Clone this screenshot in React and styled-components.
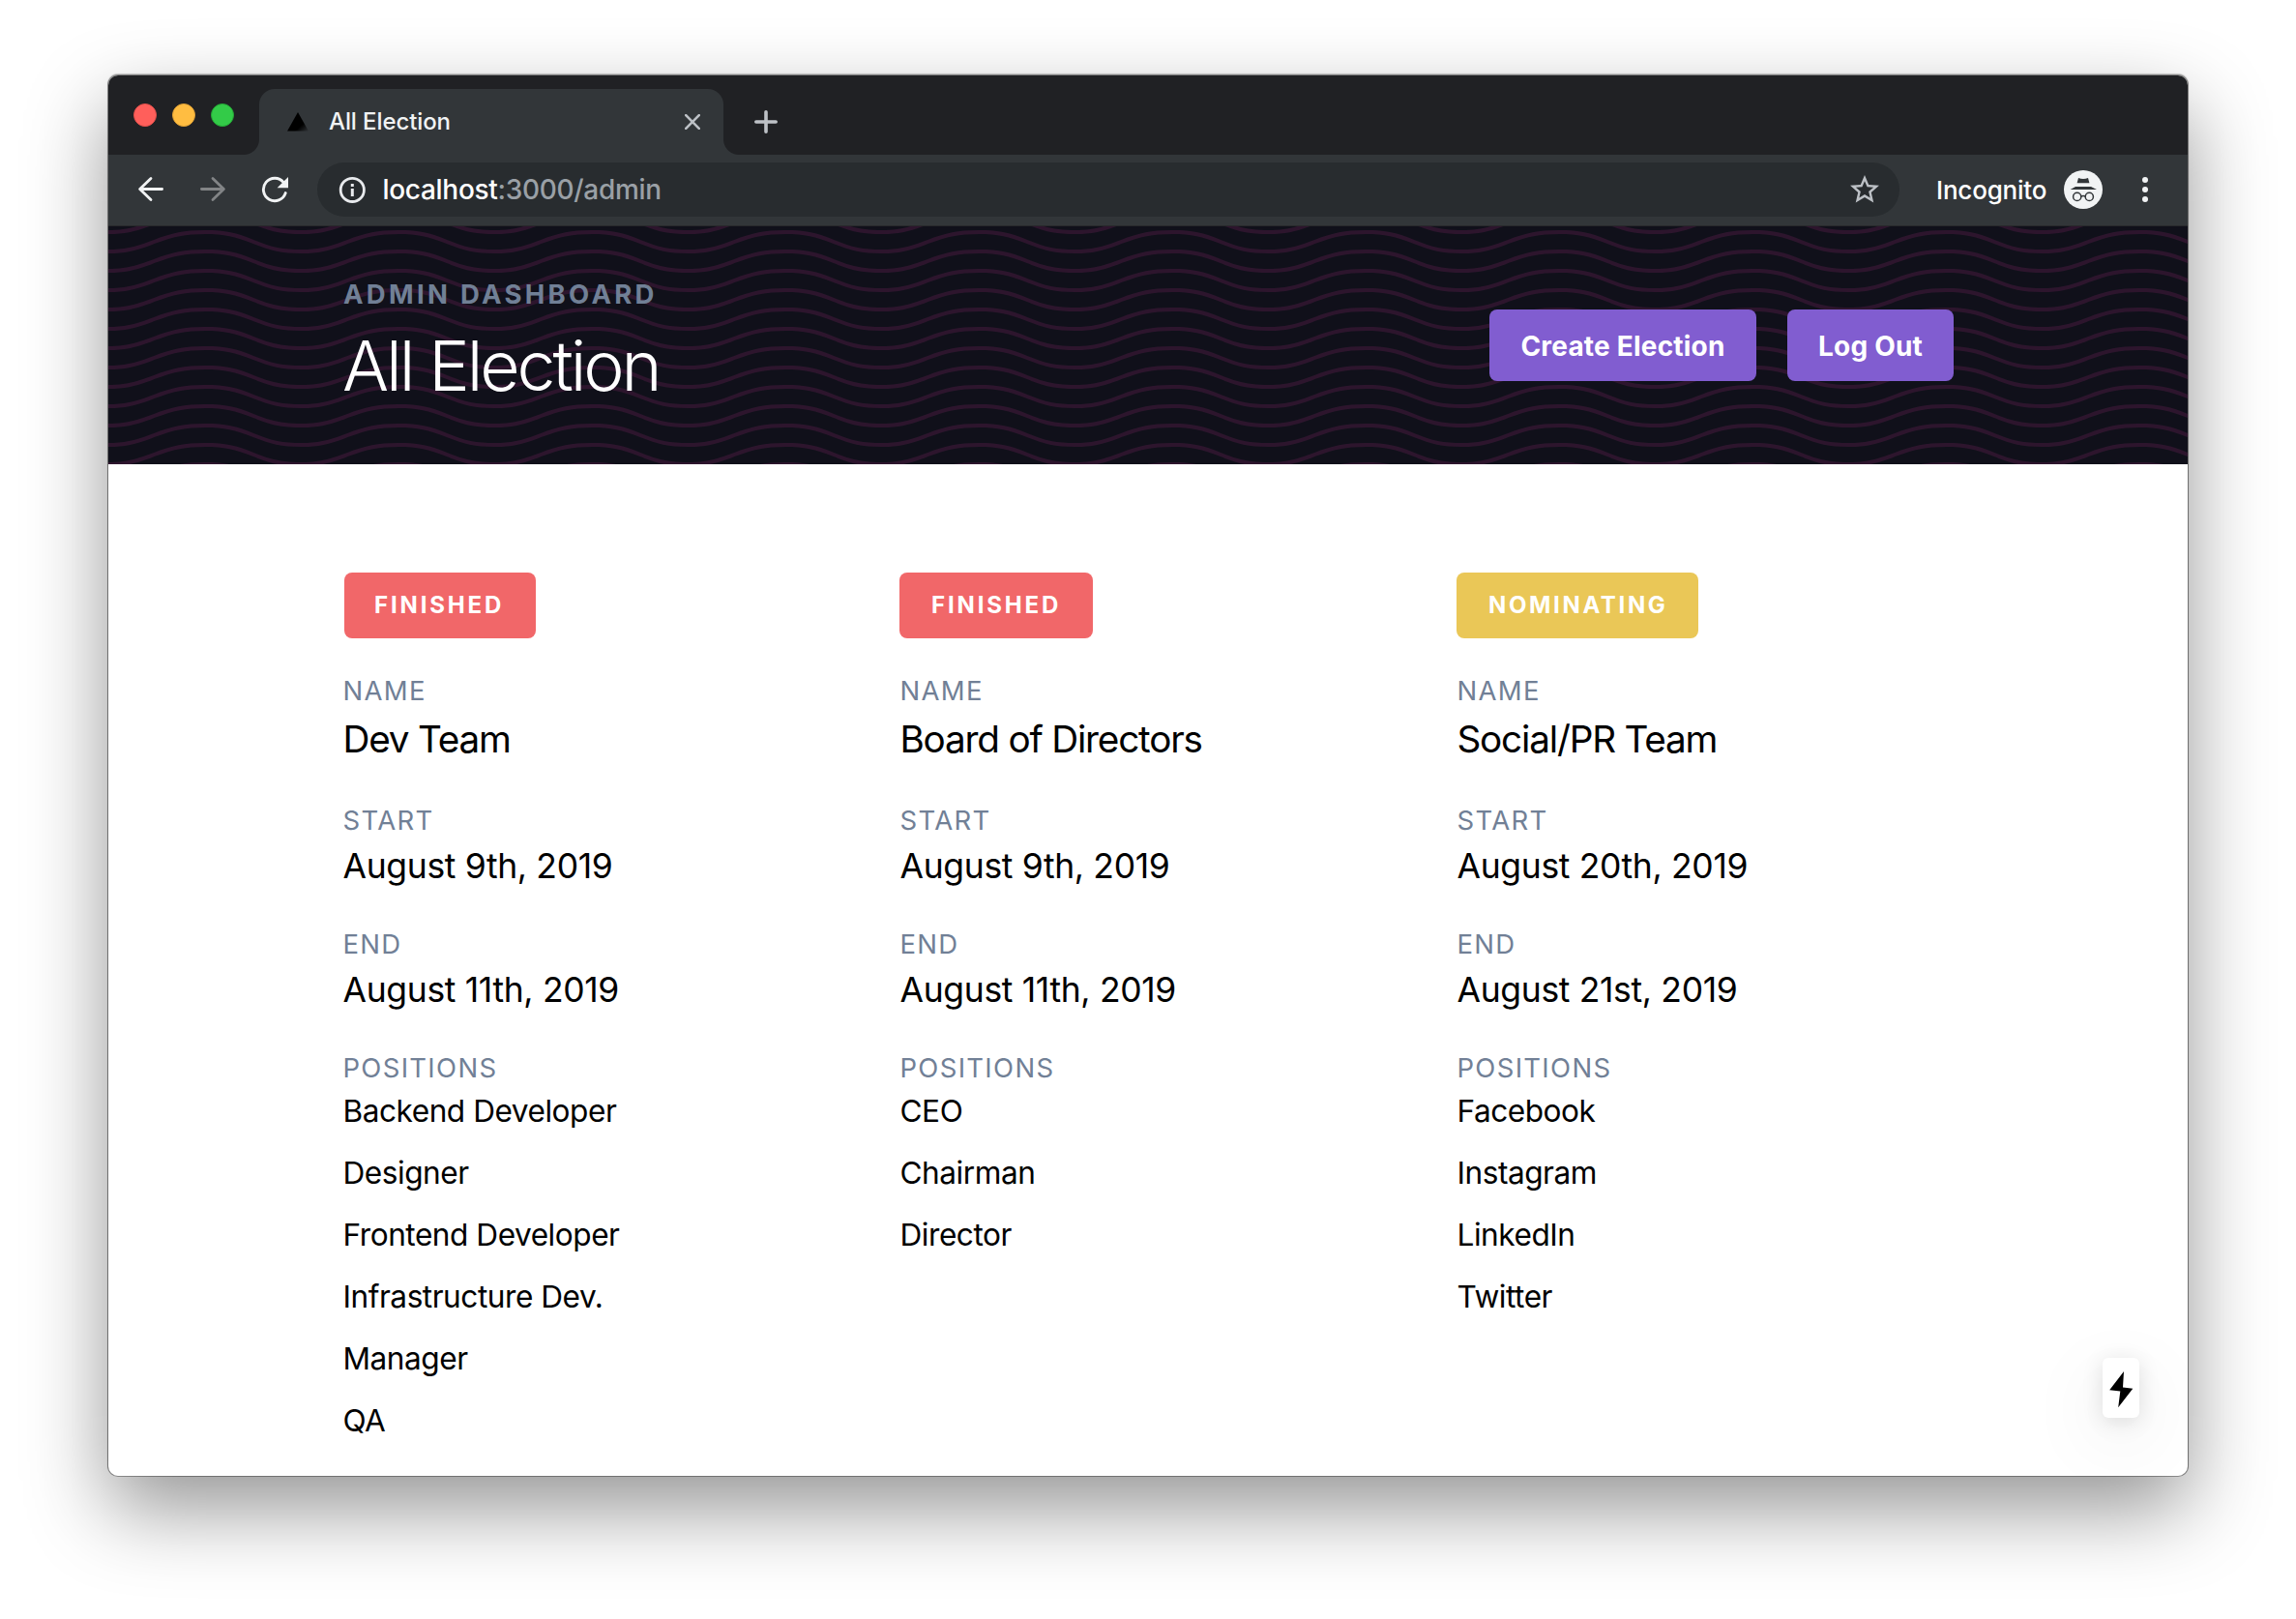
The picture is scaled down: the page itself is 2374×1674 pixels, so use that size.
import React from 'react';
import styled, { createGlobalStyle } from 'styled-components';

const GlobalStyle = createGlobalStyle`
  *, *::before, *::after { box-sizing: border-box; }
  html, body { margin: 0; padding: 0; background: #fff; }
  body { font-family: Inter, "Liberation Sans", sans-serif; }
  h1, h2, p, ul, dl, dt, dd { margin: 0; padding: 0; font-weight: inherit; }
  svg { display: block; flex: none; }
`;

const Desktop = styled.div`
  display: flex;
  width: 2374px;
  height: 1674px;
  padding: 78px 112px 148px;
  overflow: hidden;
`;

const BrowserWindow = styled.div`
  flex: 1;
  min-width: 0;
  display: flex;
  flex-direction: column;
  border-radius: 10px;
  background: #fff;
  box-shadow: 0 0 0 1px rgba(0, 0, 0, 0.32), 0 -1px 1px 1px rgba(0, 0, 0, 0.2), 0 34px 84px rgba(0, 0, 0, 0.42);
`;

/* ---------- Tab strip ---------- */

const TabStrip = styled.div`
  flex: none;
  display: flex;
  align-items: flex-end;
  height: 82px;
  border-radius: 10px 10px 0 0;
  background: #202124;
`;

const TrafficLights = styled.div`
  display: flex;
  gap: 16px;
  align-self: flex-start;
  padding: 29px 0 0 26px;
  width: 156px;
`;

const Light = styled.span`
  width: 24px;
  height: 24px;
  border-radius: 50%;
  background: ${(p) => p.$fill};
  border: 1px solid ${(p) => p.$edge};
`;

const Tab = styled.div`
  position: relative;
  display: flex;
  align-items: center;
  width: 480px;
  height: 68px;
  padding: 0 24px 0 28px;
  border-radius: 16px 16px 0 0;
  background: #323639;

  &::before,
  &::after {
    content: '';
    position: absolute;
    bottom: 0;
    width: 16px;
    height: 16px;
  }
  &::before {
    left: -16px;
    background: radial-gradient(circle at 0 0, transparent 15.5px, #323639 16.5px);
  }
  &::after {
    right: -16px;
    background: radial-gradient(circle at 100% 0, transparent 15.5px, #323639 16.5px);
  }
`;

const TabTitle = styled.span`
  flex: 1;
  margin: 0 0 1px 20px;
  font-size: 24px;
  font-weight: 450;
  line-height: 33px;
  letter-spacing: -0.1px;
  color: #f1f3f4;
`;

const NewTab = styled.div`
  align-self: center;
  margin: 14px 0 0 32px;
`;

/* ---------- Toolbar ---------- */

const Toolbar = styled.div`
  flex: none;
  display: flex;
  align-items: center;
  height: 74px;
  padding: 0 0 1px 30px;
  background: #323639;
  border-bottom: 1px solid #28292b;
`;

const NavButtons = styled.div`
  display: flex;
  gap: 36px;
  margin-right: 30px;
`;

const Omnibox = styled.div`
  display: flex;
  align-items: center;
  width: 1636px;
  height: 56px;
  padding: 0 18px 0 22px;
  border-radius: 28px;
  background: #282c2f;
`;

const Url = styled.span`
  flex: 1;
  margin-left: 17.5px;
  font-size: 28px;
  font-weight: 450;
  line-height: 36px;
  letter-spacing: -0.3px;
  color: #9aa0a6;
`;

const Host = styled.span`
  color: #fff;
`;

const IncognitoLabel = styled.span`
  width: 132px;
  margin-left: 38px;
  padding-top: 1px;
  font-size: 26px;
  font-weight: 450;
  line-height: 34px;
  letter-spacing: -0.2px;
  color: #fff;
`;

const Menu = styled.div`
  margin-left: 41px;
`;

/* ---------- Page ---------- */

const Hero = styled.header`
  position: relative;
  flex: none;
  display: flex;
  align-items: center;
  justify-content: space-between;
  height: 246px;
  padding: 0 242px;
  background: #10101a;
`;

const Waves = styled.svg`
  position: absolute;
  inset: 0;
  width: 100%;
  height: 100%;
`;

const Heading = styled.div`
  position: relative;
  padding-bottom: 13px;
`;

const Eyebrow = styled.p`
  margin-bottom: 13px;
  padding-left: 1px;
  font-size: 27.5px;
  font-weight: 700;
  line-height: 42px;
  letter-spacing: 3.3px;
  text-transform: uppercase;
  color: #718096;
`;

const Title = styled.h1`
  font-size: 71.5px;
  font-weight: 300;
  line-height: 80px;
  letter-spacing: -3.1px;
  color: #fff;
`;

const Actions = styled.div`
  position: relative;
  display: flex;
  gap: 32px;
`;

const Button = styled.button`
  width: ${(p) => p.$width}px;
  height: 74px;
  padding: 2px 0 0;
  border: 0;
  border-radius: 8px;
  background: #815dd0;
  color: #fff;
  font: 700 28px/42px Inter, "Liberation Sans", sans-serif;
  letter-spacing: 0.2px;
  white-space: nowrap;
`;

const Content = styled.main`
  position: relative;
  flex: 1;
  padding: 112px 242px 0;
  border-radius: 0 0 10px 10px;
  overflow: hidden;
`;

const Elections = styled.div`
  display: grid;
  grid-template-columns: 576px 576px 1fr;
`;

const badgeColors = { Finished: '#f16769', Nominating: '#eac757' };

const Badge = styled.span`
  height: 68px;
  width: ${(p) => (p.$status === 'Finished' ? 200 : 250)}px;
  margin-bottom: 33px;
  padding: 15px 0 16px 33px;
  border-radius: 8px;
  background: ${(p) => badgeColors[p.$status]};
  color: #fff;
  font-size: 24px;
  font-weight: 700;
  line-height: 37px;
  letter-spacing: ${(p) => (p.$status === 'Finished' ? 2.85 : 2.65)}px;
  text-transform: uppercase;
`;

const Election = styled.section`
  display: flex;
  flex-direction: column;
  align-items: flex-start;

  &:first-child ${Badge} {
    width: 198px;
    margin-left: 2px;
    padding-left: 31px;
  }
`;

const Fields = styled.dl`
  display: flex;
  flex-direction: column;
  gap: 33px;
  padding-left: 0.5px;
`;

const Label = styled.dt`
  font-size: 27.5px;
  line-height: 42px;
  letter-spacing: 1.3px;
  text-transform: uppercase;
  color: #718096;
`;

const Value = styled.dd`
  margin-bottom: ${(p) => (p.$large ? 1 : 0)}px;
  font-size: ${(p) => (p.$large ? 38.7 : 35.5)}px;
  line-height: ${(p) => (p.$large ? 58 : 53)}px;
  letter-spacing: ${(p) => (p.$large ? -1.2 : -0.34)}px;
  color: #000;
`;

const Positions = styled.ul`
  display: flex;
  flex-direction: column;
  gap: 17px;
  list-style: none;
`;

const Position = styled.li`
  font-size: 31.6px;
  line-height: 47px;
  letter-spacing: -0.47px;
  color: #000;
`;

const PrerenderBadge = styled.div`
  position: absolute;
  right: 50px;
  bottom: 60px;
  width: 38px;
  height: 62px;
  border-radius: 6px;
  background: #fff;
  box-shadow: 0 22px 80px rgba(0, 0, 0, 0.1), 0 4px 22px rgba(0, 0, 0, 0.12);
`;

const elections = [
  {
    status: 'Finished',
    name: 'Dev Team',
    start: 'August 9th, 2019',
    end: 'August 11th, 2019',
    positions: ['Backend Developer', 'Designer', 'Frontend Developer', 'Infrastructure Dev.', 'Manager', 'QA'],
  },
  {
    status: 'Finished',
    name: 'Board of Directors',
    start: 'August 9th, 2019',
    end: 'August 11th, 2019',
    positions: ['CEO', 'Chairman', 'Director'],
  },
  {
    status: 'Nominating',
    name: 'Social/PR Team',
    start: 'August 20th, 2019',
    end: 'August 21st, 2019',
    positions: ['Facebook', 'Instagram', 'LinkedIn', 'Twitter'],
  },
];

const Favicon = () => (
  <svg width="24" height="20" viewBox="0 0 24 20">
    <defs>
      <linearGradient id="fav" x1="0.6" y1="0.6" x2="1" y2="1">
        <stop offset="0.2" stopColor="#000" />
        <stop offset="1" stopColor="#000" stopOpacity="0.05" />
      </linearGradient>
    </defs>
    <path d="M12 0L23 19.5H1z" fill="url(#fav)" />
  </svg>
);

const CloseIcon = () => (
  <svg width="16" height="16" viewBox="0 0 16 16" stroke="#bdc1c6" strokeWidth="2.6" strokeLinecap="round">
    <path d="M1.2 1.2l13.6 13.6M14.8 1.2L1.2 14.8" />
  </svg>
);

const PlusIcon = () => (
  <svg width="24" height="24" viewBox="0 0 24 24" stroke="#bdc1c6" strokeWidth="3.6" strokeLinecap="round">
    <path d="M12 1.8v20.4M1.8 12h20.4" />
  </svg>
);

const ArrowIcon = ({ color, flip }) => (
  <svg width="28" height="28" viewBox="0 0 28 28" fill="none" stroke={color} strokeWidth="2.8" strokeLinecap="round">
    <path d={flip ? 'M2.4 13.5h22.4M14 2.4l11.4 11.1L14 24.6' : 'M25.6 13.5H3.2M14 2.4L2.6 13.5 14 24.6'} strokeLinejoin="round" />
  </svg>
);

const ReloadIcon = () => (
  <svg width="28" height="28" viewBox="0 0 28 28">
    <path d="M23.2 6.6A11.7 11.7 0 1 0 25.2 17.6" fill="none" stroke="#f1f3f4" strokeWidth="2.9" strokeLinecap="round" />
    <path d="M28 1v11.2H16.6z" fill="#f1f3f4" />
  </svg>
);

const InfoIcon = () => (
  <svg width="28" height="28" viewBox="0 0 28 28">
    <circle cx="14.3" cy="14.4" r="12.1" fill="none" stroke="#e8eaed" strokeWidth="2.8" />
    <path d="M12.8 8h3v3h-3zM12.8 13h3v8h-3z" fill="#e8eaed" />
  </svg>
);

const StarIcon = () => (
  <svg width="36" height="36" viewBox="0 0 24 24" fill="#bdc1c6">
    <path d="M22 9.24l-7.19-.62L12 2 9.19 8.63 2 9.24l5.46 4.73L5.82 21 12 17.27 18.18 21l-1.63-7.03L22 9.24zM12 15.4l-3.76 2.27 1-4.28-3.32-2.88 4.38-.38L12 6.1l1.71 4.04 4.38.38-3.32 2.88 1 4.28L12 15.4z" />
  </svg>
);

const IncognitoIcon = () => (
  <svg width="40" height="40" viewBox="0 0 40 40">
    <circle cx="20" cy="20" r="20" fill="#f1f3f4" />
    <path d="M13.6 13.2l1.4-5.2q5 2 10 0l1.4 5.2zM12 17h16l6 2.9H6.6z" fill="#323639" />
    <g fill="none" stroke="#323639" strokeWidth="1.5">
      <circle cx="13.7" cy="27.4" r="4.1" />
      <circle cx="26.3" cy="27.4" r="4.1" />
      <path d="M17.8 27.2q2.2-1.2 4.4 0" />
    </g>
  </svg>
);

const DotsIcon = () => (
  <svg width="6" height="26" viewBox="0 0 6 26" fill="#f1f3f4">
    <circle cx="3" cy="3" r="3" />
    <circle cx="3" cy="13" r="3" />
    <circle cx="3" cy="23" r="3" />
  </svg>
);

const BoltIcon = () => (
  <svg width="38" height="62" viewBox="0 0 38 62">
    <path d="M22 14l-1 16.5 10.3 1.2L16.2 51.2l2.1-16.6L7.2 33.2z" fill="#000" />
  </svg>
);

const WavePattern = () => (
  <Waves>
    <defs>
      <pattern id="waves" width="200" height="40" patternUnits="userSpaceOnUse">
        <path
          transform="scale(2)"
          fill="#2d152d"
          d="M21.184 20c.357-.13.72-.264 1.088-.402l1.768-.661C33.64 15.347 39.647 14 50 14c10.271 0 15.362 1.222 24.629 4.928.955.383 1.869.74 2.75 1.072h6.225c-2.51-.73-5.139-1.691-8.233-2.928C65.888 13.278 60.562 12 50 12c-10.626 0-16.855 1.397-26.66 5.063l-1.767.662c-2.475.923-4.66 1.674-6.724 2.275h6.335zm0-20C13.258 2.892 8.077 4 0 4V2c5.744 0 9.951-.574 14.85-2h6.334zM77.38 0C85.239 2.966 90.502 4 100 4V2c-6.842 0-11.386-.542-16.396-2h-6.225zM0 14c8.44 0 13.718-1.21 22.272-4.402l1.768-.661C33.64 5.347 39.647 4 50 4c10.271 0 15.362 1.222 24.629 4.928C84.112 12.722 89.438 14 100 14v-2c-10.271 0-15.362-1.222-24.629-4.928C65.888 3.278 60.562 2 50 2 39.374 2 33.145 3.397 23.34 7.063l-1.767.662C13.223 10.84 8.163 12 0 12v2z"
        />
      </pattern>
    </defs>
    <rect width="100%" height="100%" fill="url(#waves)" />
  </Waves>
);

const Field = ({ label, value, large }) => (
  <div>
    <Label>{label}</Label>
    <Value $large={large}>{value}</Value>
  </div>
);

export default function App() {
  return (
    <>
      <GlobalStyle />
      <Desktop>
        <BrowserWindow>
          <TabStrip>
            <TrafficLights>
              <Light $fill="#ff5f5b" $edge="#e2504b" />
              <Light $fill="#ffbd41" $edge="#dfa033" />
              <Light $fill="#33cb48" $edge="#24a936" />
            </TrafficLights>
            <Tab>
              <Favicon />
              <TabTitle>All Election</TabTitle>
              <CloseIcon />
            </Tab>
            <NewTab>
              <PlusIcon />
            </NewTab>
          </TabStrip>
          <Toolbar>
            <NavButtons>
              <ArrowIcon color="#f1f3f4" />
              <ArrowIcon color="#828486" flip />
              <ReloadIcon />
            </NavButtons>
            <Omnibox>
              <InfoIcon />
              <Url>
                <Host>localhost</Host>:3000/admin
              </Url>
              <StarIcon />
            </Omnibox>
            <IncognitoLabel>Incognito</IncognitoLabel>
            <IncognitoIcon />
            <Menu>
              <DotsIcon />
            </Menu>
          </Toolbar>
          <Hero>
            <WavePattern />
            <Heading>
              <Eyebrow>Admin Dashboard</Eyebrow>
              <Title>All Election</Title>
            </Heading>
            <Actions>
              <Button $width={276}>Create Election</Button>
              <Button $width={172}>Log Out</Button>
            </Actions>
          </Hero>
          <Content>
            <Elections>
              {elections.map((e) => (
                <Election key={e.name}>
                  <Badge $status={e.status}>{e.status}</Badge>
                  <Fields>
                    <Field label="Name" value={e.name} large />
                    <Field label="Start" value={e.start} />
                    <Field label="End" value={e.end} />
                    <div>
                      <Label>Positions</Label>
                      <dd>
                        <Positions>
                          {e.positions.map((p) => (
                            <Position key={p}>{p}</Position>
                          ))}
                        </Positions>
                      </dd>
                    </div>
                  </Fields>
                </Election>
              ))}
            </Elections>
            <PrerenderBadge>
              <BoltIcon />
            </PrerenderBadge>
          </Content>
        </BrowserWindow>
      </Desktop>
    </>
  );
}
